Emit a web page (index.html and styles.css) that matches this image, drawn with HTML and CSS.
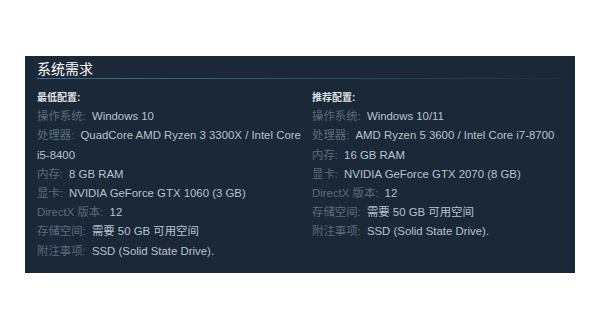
FILE: index.html
```html
<!DOCTYPE html>
<html lang="zh">
<head>
<meta charset="utf-8">
<link rel="stylesheet" href="styles.css">
</head>
<body>
<div class="panel">
  <h2 class="title">系统需求</h2>
  <div class="cols">
    <ul class="col">
      <li class="head">最低配置:</li>
      <li><span class="lbl">操作系统:</span> Windows 10</li>
      <li><span class="lbl">处理器:</span> QuadCore AMD Ryzen 3 3300X / Intel Core i5-8400</li>
      <li><span class="lbl">内存:</span> 8 GB RAM</li>
      <li><span class="lbl">显卡:</span> NVIDIA GeForce GTX 1060 (3 GB)</li>
      <li><span class="lbl">DirectX 版本:</span> 12</li>
      <li><span class="lbl">存储空间:</span> 需要 50 GB 可用空间</li>
      <li><span class="lbl">附注事项:</span> SSD (Solid State Drive).</li>
    </ul>
    <ul class="col">
      <li class="head">推荐配置:</li>
      <li><span class="lbl">操作系统:</span> Windows 10/11</li>
      <li><span class="lbl">处理器:</span> AMD Ryzen 5 3600 / Intel Core i7-8700</li>
      <li><span class="lbl">内存:</span> 16 GB RAM</li>
      <li><span class="lbl">显卡:</span> NVIDIA GeForce GTX 2070 (8 GB)</li>
      <li><span class="lbl">DirectX 版本:</span> 12</li>
      <li><span class="lbl">存储空间:</span> 需要 50 GB 可用空间</li>
      <li><span class="lbl">附注事项:</span> SSD (Solid State Drive).</li>
    </ul>
  </div>
</div>
</body>
</html>
```
FILE: styles.css
```css
html, body {
  margin: 0;
  padding: 0;
  background: #ffffff;
}
body {
  padding: 56px 25px 0 25px;
  font-family: "Liberation Sans", Arial, "Noto Sans CJK SC", sans-serif;
}
.panel {
  width: 550px;
  box-sizing: border-box;
  background: #1b2838;
  padding: 5px 12px 12px 12px;
}
.title {
  margin: 0;
  font-size: 14px;
  line-height: 17px;
  font-weight: normal;
  color: #ffffff;
}
.title::after {
  content: "";
  display: block;
  height: 1px;
  background: linear-gradient(to right, #3a7196 0%, #2c5877 40%, rgba(44, 88, 119, 0.35) 85%, rgba(44, 88, 119, 0.1) 100%);
}
.cols {
  display: grid;
  grid-template-columns: 267px 1fr;
  column-gap: 8px;
  padding-top: 9px;
}
.col {
  list-style: none;
  margin: 0;
  padding: 0;
}
.col li {
  font-size: 11.4px;
  line-height: 19.2px;
  color: #b8c3cd;
}
.col li.head {
  font-size: 10px;
  font-weight: bold;
  color: #dfe3e6;
}
.lbl {
  color: #5b6b7c;
  margin-right: 3px;
}
```
